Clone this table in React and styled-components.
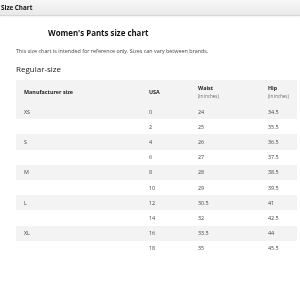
import React from "react";
import styled, { createGlobalStyle } from "styled-components";

const rows = [
  { size: "XS", usa: "0", waist: "24", hip: "34.5" },
  { size: "", usa: "2", waist: "25", hip: "35.5" },
  { size: "S", usa: "4", waist: "26", hip: "36.5" },
  { size: "", usa: "6", waist: "27", hip: "37.5" },
  { size: "M", usa: "8", waist: "28", hip: "38.5" },
  { size: "", usa: "10", waist: "29", hip: "39.5" },
  { size: "L", usa: "12", waist: "30.5", hip: "41" },
  { size: "", usa: "14", waist: "32", hip: "42.5" },
  { size: "XL", usa: "16", waist: "33.5", hip: "44" },
  { size: "", usa: "18", waist: "35", hip: "45.5" },
];

function App() {
  return (
    <>
      <GlobalStyle />
      <Page>
        <Header>Size Chart</Header>
        <Body>
          <Title>Women's Pants size chart</Title>
          <Note>This size chart is intended for reference only. Sizes can vary between brands.</Note>
          <SubTitle>Regular-size</SubTitle>
          <Table>
            <colgroup>
              <col style={{ width: 125 }} />
              <col style={{ width: 49 }} />
              <col style={{ width: 70 }} />
              <col />
            </colgroup>
            <thead>
              <HeadRow>
                <Th>Manufacturer size</Th>
                <Th>USA</Th>
                <Th>
                  Waist
                  <Unit>(in inches)</Unit>
                </Th>
                <Th>
                  Hip
                  <Unit>(in inches)</Unit>
                </Th>
              </HeadRow>
            </thead>
            <tbody>
              {rows.map((row, i) => (
                <Row key={i} $shaded={i % 2 === 0}>
                  <Td>{row.size}</Td>
                  <Td>{row.usa}</Td>
                  <Td>{row.waist}</Td>
                  <Td>{row.hip}</Td>
                </Row>
              ))}
            </tbody>
          </Table>
        </Body>
      </Page>
    </>
  );
}

export default App;

const GlobalStyle = createGlobalStyle`
  body {
    margin: 0;
    background: #fff;
    font-family: "Open Sans", "Noto Sans", sans-serif;
    -webkit-font-smoothing: antialiased;
  }
`;

const Page = styled.div`
  width: 300px;
  height: 300px;
  overflow: hidden;
  will-change: transform;
`;

const Header = styled.div`
  height: 15px;
  line-height: 15px;
  padding-left: 1px;
  font-size: 6.3px;
  font-weight: 700;
  color: #111;
  background: linear-gradient(#f7f7f7, #e9e9e9);
  border-bottom: 1px solid #d6d6d6;
  box-shadow: 0 1px 2px rgba(0, 0, 0, 0.06);
`;

const Body = styled.div`
  padding: 0 3px 0 16px;
`;

const Title = styled.div`
  margin-top: 11px;
  padding-left: 32px;
  font-size: 7.9px;
  font-weight: 700;
  color: #111;
  line-height: 12px;
`;

const Note = styled.div`
  margin-top: 8px;
  font-size: 5.4px;
  color: #444;
  line-height: 8px;
`;

const SubTitle = styled.div`
  margin-top: 8px;
  font-size: 8px;
  color: #222;
  line-height: 12px;
`;

const Table = styled.table`
  margin-top: 5px;
  width: 281px;
  border-collapse: collapse;
  table-layout: fixed;
  font-size: 5.4px;
  color: #444;
`;

const HeadRow = styled.tr`
  height: 24px;
  background: #f3f3f3;
`;

const Th = styled.th`
  box-sizing: border-box;
  text-align: left;
  font-weight: 700;
  color: #222;
  padding: 0 0 0 8px;
  vertical-align: middle;
  line-height: 8px;
  white-space: nowrap;
`;

const Unit = styled.div`
  font-weight: 400;
  font-size: 4.4px;
  color: #666;
`;

const Row = styled.tr`
  height: 15.2px;
  background: ${(p) => (p.$shaded ? "#f3f3f3" : "#fff")};
`;

const Td = styled.td`
  box-sizing: border-box;
  padding: 0 0 0 8px;
  vertical-align: middle;
  line-height: 8px;
`;
